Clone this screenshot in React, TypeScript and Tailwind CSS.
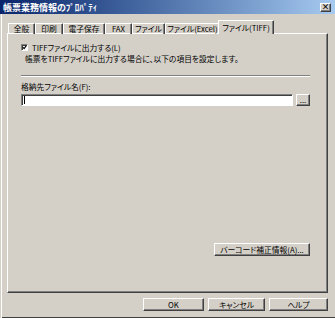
const font = "font-['Noto_Sans_CJK_JP','Noto_Sans',sans-serif] [font-feature-settings:'palt']";

const bevel =
  "bg-[#d4d0c8] border-t border-l border-t-white border-l-white border-r border-b border-r-[#404040] border-b-[#404040] shadow-[inset_-1px_-1px_0_#808080]";

const tabs = [
  { label: "全般", w: "w-[27px]" },
  { label: "印刷", w: "w-[28px]" },
  { label: "電子保存", w: "w-[42px]" },
  { label: "FAX", w: "w-[27px]" },
  { label: "ファイル", w: "w-[33px]" },
  { label: "ファイル(Excel)", w: "w-[55px]" },
];

const Button = ({ label, className }: { label: string; className: string }) => (
  <div className={`${bevel} ${className} flex items-center justify-center text-[7.75px] leading-none text-black`}>
    {label}
  </div>
);

const App = () => {
  return (
    <div className={`w-[335px] h-[318px] bg-[#d4d0c8] flex flex-col overflow-hidden ${font}`}>
      {/* title bar */}
      <div className="h-[14px] shrink-0 bg-gradient-to-r from-[#0a246a] to-[#a6caf0] flex items-center pl-[3px] pr-[4px]">
        <span className="text-white font-bold text-[9px] leading-none">帳票業務情報のﾌﾟﾛﾊﾟﾃｨ</span>
        <div className={`${bevel} ml-auto w-[11px] h-[9px] flex items-center justify-center text-[8px] font-bold leading-none text-black`}>
          ×
        </div>
      </div>

      {/* body */}
      <div className="flex-1 flex flex-col shadow-[inset_1px_0_0_#d4d0c8,inset_2px_0_0_#ffffff,inset_0_-1px_0_#404040] pl-[7px] pr-[7px] pt-[7px] pb-[7px]">
        {/* tabs */}
        <div className="flex items-end h-[13px] pl-[1px] relative z-10 -mb-px">
          {tabs.map((t) => (
            <div
              key={t.label}
              className={`${t.w} h-[11px] flex items-center justify-center text-[7.75px] leading-none text-black border-t border-t-white border-l border-l-white border-r border-r-[#404040] shadow-[inset_-1px_0_0_#808080] rounded-t-[1px]`}
            >
              {t.label}
            </div>
          ))}
          <div className="w-[56px] h-[14px] -ml-[2px] bg-[#d4d0c8] flex items-start justify-center pt-[3px] text-[7.75px] leading-none text-black border-t border-t-white border-l border-l-white border-r border-r-[#404040] shadow-[inset_-1px_0_0_#808080] rounded-t-[1px]">
            ファイル(TIFF)
          </div>
        </div>

        {/* panel */}
        <div className="h-[260px] w-[321px] border-t border-l border-t-white border-l-white border-r border-b border-r-[#404040] border-b-[#404040] shadow-[inset_-1px_-1px_0_#808080] flex flex-col pl-[13px] pr-[17px] pt-[10px] text-[7.75px] leading-none text-black">
          <div className="flex items-center">
            <div className="w-[7px] h-[7px] bg-white border border-t-[#808080] border-l-[#808080] border-r-white border-b-white shadow-[inset_1px_1px_0_#404040] flex items-center justify-center">
              <svg width="5" height="5" viewBox="0 0 7 7">
                <path d="M1 3 L3 5 L6 1" stroke="#000" strokeWidth="1.6" fill="none" />
              </svg>
            </div>
            <span className="ml-[4px]">TIFFファイルに出力する(L)</span>
          </div>
          <div className="mt-[3px] pl-[4px]">帳票をTIFFファイルに出力する場合に、以下の項目を設定します。</div>

          <div className="mt-[12px] h-[2px] border-t border-t-[#808080] border-b border-b-white" />

          <div className="mt-[6px]">格納先ファイル名(F):</div>
          <div className="mt-[4px] flex items-center gap-[3px]">
            <div className="flex-1 h-[12px] bg-white border border-t-[#808080] border-l-[#808080] border-r-white border-b-white shadow-[inset_1px_1px_0_#404040] flex items-center pl-[2px]">
              <div className="w-px h-[8px] bg-black" />
            </div>
            <Button label="..." className="w-[14px] h-[12px]" />
          </div>

          <div className="mt-auto mb-[36px] flex justify-end">
            <Button label="バーコード補正情報(A)..." className="w-[96px] h-[13px]" />
          </div>
        </div>

        {/* dialog buttons */}
        <div className="mt-[5px] flex justify-end gap-[4px]">
          <Button label="OK" className="w-[61px] h-[13px]" />
          <Button label="キャンセル" className="w-[57px] h-[13px]" />
          <Button label="ヘルプ" className="w-[59px] h-[13px]" />
        </div>
      </div>
    </div>
  );
};

export default App;
